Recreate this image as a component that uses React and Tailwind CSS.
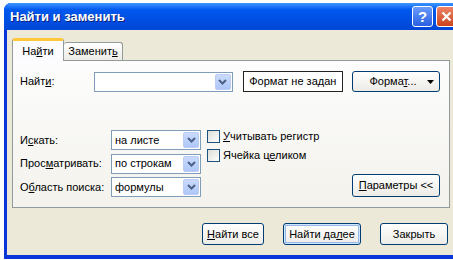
import React from "react";

const U = ({ children }) => <span className="underline underline-offset-[1px]">{children}</span>;

const Chevron = () => (
  <svg width="9" height="6" viewBox="0 0 9 6">
    <path d="M1 1 L4.5 4.5 L8 1" fill="none" stroke="#4D6185" strokeWidth="2" />
  </svg>
);

const Combo = ({ w, children }) => (
  <div className={`${w} h-[20px] border border-[#7F9DB9] bg-white flex items-stretch`}>
    <div className="flex-1 flex items-center pl-[3px] overflow-hidden whitespace-nowrap">{children}</div>
    <div className="w-[16px] m-[1px] rounded-[2px] border border-[#BCCBF3] bg-linear-to-b from-[#C9DAFC] to-[#AFC7F8] flex items-center justify-center">
      <Chevron />
    </div>
  </div>
);

const Btn = ({ w, h = "h-[22px]", def, children }) => (
  <div className={`${w} ${h} rounded-[3px] border border-[#003C74] bg-linear-to-b from-[#FFFFFF] to-[#ECEBE6] flex items-center justify-center ${def ? "shadow-[inset_0_0_0_1px_#CEE7FF,inset_0_0_0_2px_#98B8EA]" : ""}`}>
    {children}
  </div>
);

const Check = ({ children }) => (
  <div className="flex items-center gap-[3px] h-[13px]">
    <div className="w-[13px] h-[13px] border border-[#1C5180] bg-linear-to-br from-[#DCDCD7] to-[#FFFFFF]" />
    <span>{children}</span>
  </div>
);

export default function App() {
  return (
    <div
      className="w-[453px] h-[260px] overflow-hidden bg-white pl-[4px] pt-[3px] text-[11px] text-black"
      style={{ fontFamily: '"Liberation Sans", Arial, sans-serif' }}
    >
      <div className="w-[460px] h-[256px] flex flex-col rounded-t-[7px] bg-[#0A36D8]">
        {/* Title bar */}
        <div className="h-[27px] rounded-t-[7px] bg-linear-to-b from-[#3D95FF] from-0% via-[#0058EE] via-25% to-[#0046D6] to-100% flex items-center pl-[6px] pr-[7px]">
          <span className="text-white font-bold text-[13px] flex-1 [text-shadow:1px_1px_0_#0A1E7A]">Найти и заменить</span>
          <div className="flex gap-[3px] items-center">
            <div className="w-[21px] h-[21px] rounded-[3px] border border-white bg-linear-to-b from-[#6A9BFB] to-[#2A5FE3] flex items-center justify-center text-white font-bold text-[15px] leading-none">?</div>
            <div className="w-[21px] h-[21px] rounded-[3px] border border-white bg-linear-to-b from-[#EC8466] to-[#CB4317] flex items-center justify-center">
              <svg width="11" height="11" viewBox="0 0 11 11">
                <path d="M1.5 1.5 L9.5 9.5 M9.5 1.5 L1.5 9.5" stroke="white" strokeWidth="2.2" />
              </svg>
            </div>
          </div>
        </div>
        {/* Body */}
        <div className="flex-1 mx-[3px] mb-[4px] bg-[#ECE9D8] flex flex-col pt-[8px]">
          {/* Tabs */}
          <div className="ml-[5px] h-[22px] flex items-end relative z-10">
            <div className="w-[52px] h-[23px] -mb-[1px] bg-[#FCFCFE] border border-[#919B9C] border-b-0 rounded-t-[3px] border-t-[3px] border-t-[#FFC83C] flex items-center justify-center">
              <span>На<U>й</U>ти</span>
            </div>
            <div className="w-[59px] h-[18px] bg-linear-to-b from-[#FFFFFF] to-[#ECEBE6] border border-[#919B9C] border-l-0 border-b-0 rounded-t-[3px] flex items-center justify-center">
              <span>Заменит<U>ь</U></span>
            </div>
          </div>
          {/* Panel */}
          <div className="ml-[5px] w-[438px] h-[148px] border border-[#919B9C] bg-linear-to-b from-[#FDFDFD] to-[#F3F2EC] flex flex-col pt-[10px] pl-[7px] pr-[9px]">
            <div className="flex items-center h-[21px]">
              <div className="w-[74px]">Найт<U>и</U>:</div>
              <Combo w="w-[140px]" />
              <div className="ml-[10px] w-[101px] h-[21px] border border-[#222] bg-white flex items-center justify-center">
                Формат не задан
              </div>
              <div className="ml-[9px]">
                <Btn w="w-[88px]" h="h-[21px]">
                  <span className="flex-1 text-center pl-[6px]">Форма<U>т</U>...</span>
                  <svg width="7" height="4" viewBox="0 0 7 4" className="mr-[5px]">
                    <path d="M0 0 L7 0 L3.5 4 Z" fill="black" />
                  </svg>
                </Btn>
              </div>
            </div>
            <div className="mt-[38px] flex">
              <div className="flex flex-col gap-[3.5px]">
                <div className="flex items-center">
                  <div className="w-[91px]">И<U>с</U>кать:</div>
                  <Combo w="w-[90px]">на листе</Combo>
                </div>
                <div className="flex items-center">
                  <div className="w-[91px]">Прос<U>м</U>атривать:</div>
                  <Combo w="w-[90px]">по строкам</Combo>
                </div>
                <div className="flex items-center">
                  <div className="w-[91px]">О<U>б</U>ласть поиска:</div>
                  <Combo w="w-[90px]">формулы</Combo>
                </div>
              </div>
              <div className="ml-[6px] flex flex-col gap-[6px]">
                <Check><U>У</U>читывать регистр</Check>
                <Check>Ячейка ц<U>е</U>ликом</Check>
              </div>
              <div className="flex-1 flex items-end justify-end pb-[0px]">
                <Btn w="w-[88px]" h="h-[23px]">
                  <span><U>П</U>араметры &lt;&lt;</span>
                </Btn>
              </div>
            </div>
          </div>
          {/* Bottom buttons */}
          <div className="mt-[15px] flex justify-end gap-[19px] pr-[13px]">
            <Btn w="w-[62px]"><span><U>Н</U>айти все</span></Btn>
            <Btn w="w-[78px]" def><span>Найти да<U>л</U>ее</span></Btn>
            <Btn w="w-[68px]"><span>Закрыть</span></Btn>
          </div>
        </div>
      </div>
    </div>
  );
}
